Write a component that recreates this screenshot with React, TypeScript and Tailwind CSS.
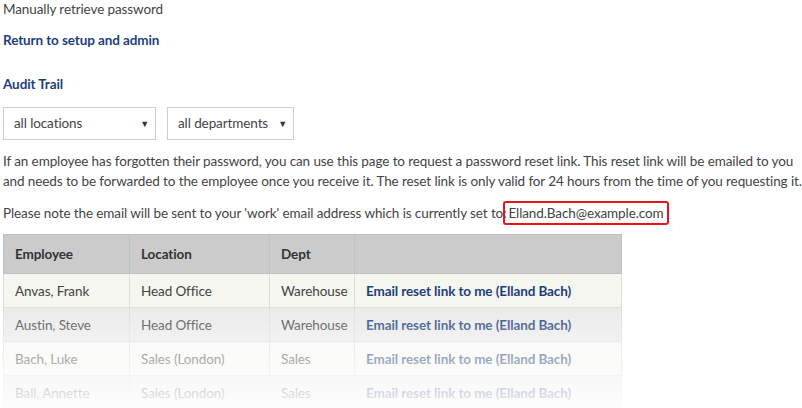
import React from "react";

const rows = [
  { name: "Anvas, Frank", loc: "Head Office", dept: "Warehouse", bg: "bg-[#f6f6f0]" },
  { name: "Austin, Steve", loc: "Head Office", dept: "Warehouse", bg: "bg-[#e9e9e9]" },
  { name: "Bach, Luke", loc: "Sales (London)", dept: "Sales", bg: "bg-[#f6f6f0]" },
  { name: "Ball, Annette", loc: "Sales (London)", dept: "Sales", bg: "bg-[#e9e9e9]" },
];

function Select({ label, w }: { label: string; w: string }) {
  return (
    <div className={`${w} h-[33px] border border-[#cccccc] bg-white flex items-center justify-between pl-[10px] pr-[6px]`}>
      <span>{label}</span>
      <span className="text-[9px] text-[#333]">▼</span>
    </div>
  );
}

export default function App() {
  return (
    <div className="w-[802px] h-[408px] overflow-hidden bg-white pl-[3px] text-[13.5px] tracking-[-0.1px] text-[#444] font-['Lato','Liberation_Sans',sans-serif]">
      <div className="leading-[18px]">Manually retrieve password</div>
      <div className="mt-[12px] leading-5 font-bold text-[#1e3f7c]">Return to setup and admin</div>
      <div className="mt-[24px] leading-5 font-bold text-[#1e3f7c]">Audit Trail</div>
      <div className="mt-[13px] flex gap-[11px]">
        <Select label="all locations" w="w-[153px]" />
        <Select label="all departments" w="w-[127px]" />
      </div>
      <p className="mt-[11px] leading-5 whitespace-nowrap">
        If an employee has forgotten their password, you can use this page to request a password reset link. This reset link will be emailed to you
        <br />
        and needs to be forwarded to the employee once you receive it. The reset link is only valid for 24 hours from the time of you requesting it.
      </p>
      <p className="mt-[10px] leading-6 whitespace-nowrap">
        Please note the email will be sent to your 'work' email address which is currently set to:
        <span className="ml-[-3px] inline-block border-2 border-[#e8141c] rounded-[3px] px-[3px] leading-5">Elland.Bach@example.com</span>
      </p>
      <div className="relative mt-[9px] w-[618px]">
        <table className="w-[618px] border-collapse table-fixed">
          <colgroup>
            <col className="w-[126px]" />
            <col className="w-[140px]" />
            <col className="w-[85px]" />
            <col className="w-[267px]" />
          </colgroup>
          <thead>
            <tr className="bg-[#cbcbcb] h-[39px] text-[#333] font-bold">
              <th className="text-left pl-[11px] border border-[#c0c0c0]">Employee</th>
              <th className="text-left pl-[11px] border border-[#c0c0c0]">Location</th>
              <th className="text-left pl-[11px] border border-[#c0c0c0]">Dept</th>
              <th className="border border-[#c0c0c0]"></th>
            </tr>
          </thead>
          <tbody>
            {rows.map((r) => (
              <tr key={r.name} className={`${r.bg} h-[34px]`}>
                <td className="pl-[11px] pt-[2px] border border-[#dddddd]">{r.name}</td>
                <td className="pl-[11px] pt-[2px] border border-[#dddddd]">{r.loc}</td>
                <td className="pl-[11px] pt-[2px] border border-[#dddddd] whitespace-nowrap">{r.dept}</td>
                <td className="pl-[11px] pt-[2px] border border-[#dddddd] font-bold text-[#1e3f7c]">Email reset link to me (Elland Bach)</td>
              </tr>
            ))}
          </tbody>
        </table>
        <div className="pointer-events-none absolute left-[-4px] right-[-4px] top-[66px] bottom-[-10px] bg-gradient-to-b from-white/0 via-white/55 to-white" />
      </div>
    </div>
  );
}
